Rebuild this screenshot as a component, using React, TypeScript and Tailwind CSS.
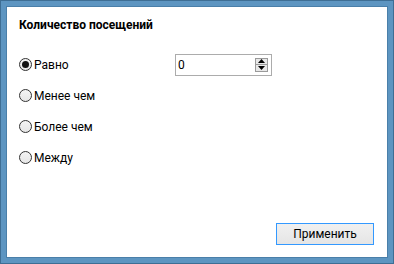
import React from "react";

const font = { fontFamily: 'Roboto, "Noto Sans", sans-serif' };

function Radio({ checked, label }: { checked?: boolean; label: string }) {
  return (
    <div className="flex items-center h-[31px]">
      <span className="w-[13px] h-[13px] rounded-full border border-[#333] bg-gradient-to-b from-[#f4f4f4] to-[#e6e6e6] flex items-center justify-center">
        {checked && <span className="w-[7px] h-[7px] rounded-full bg-[#111]" />}
      </span>
      <span className="ml-[2px] text-[12px] text-black leading-none">{label}</span>
    </div>
  );
}

export default function App() {
  return (
    <div className="w-[394px] h-[264px] bg-[#3e6e94] p-px" style={font}>
      <div className="w-full h-full bg-[#5d95c1] p-[5px]">
        <div className="w-full h-full bg-[#4a7fa9] p-px">
          <div className="w-full h-full bg-white flex flex-col pl-[12px]">

            {/* title */}
            <div className="mt-[10px] h-[16px] text-[12px] font-bold text-black leading-[16px]">
              Количество посещений
            </div>

            {/* options */}
            <div className="mt-[16px] flex flex-col">
              <div className="flex items-center">
                <div className="w-[156px]">
                  <Radio checked label="Равно" />
                </div>
                <div className="w-[97px] h-[22px] border border-[#acacac] flex items-center pl-[2px] pr-[3px]">
                  <span className="flex-1 text-[12px] text-black leading-none">0</span>
                  <div className="flex flex-col">
                    <span className="w-[13px] h-[7px] border border-[#9a9a9a] bg-[#e8e8e8] flex items-center justify-center">
                      <svg width="7" height="4" viewBox="0 0 7 4"><path d="M0 4 L3.5 0 L7 4 Z" fill="#000" /></svg>
                    </span>
                    <span className="w-[13px] h-[7px] border border-t-0 border-[#9a9a9a] bg-[#e8e8e8] flex items-center justify-center">
                      <svg width="7" height="4" viewBox="0 0 7 4"><path d="M0 0 L7 0 L3.5 4 Z" fill="#000" /></svg>
                    </span>
                  </div>
                </div>
              </div>
              <Radio label="Менее чем" />
              <Radio label="Более чем" />
              <Radio label="Между" />
            </div>

            {/* apply */}
            <button className="mt-auto self-end mr-[13px] mb-[12px] w-[98px] h-[22px] border border-[#3399ff] bg-gradient-to-b from-[#f0f0f0] to-[#e5e5e5] text-[12px] text-black leading-none">
              Применить
            </button>

          </div>
        </div>
      </div>
    </div>
  );
}
